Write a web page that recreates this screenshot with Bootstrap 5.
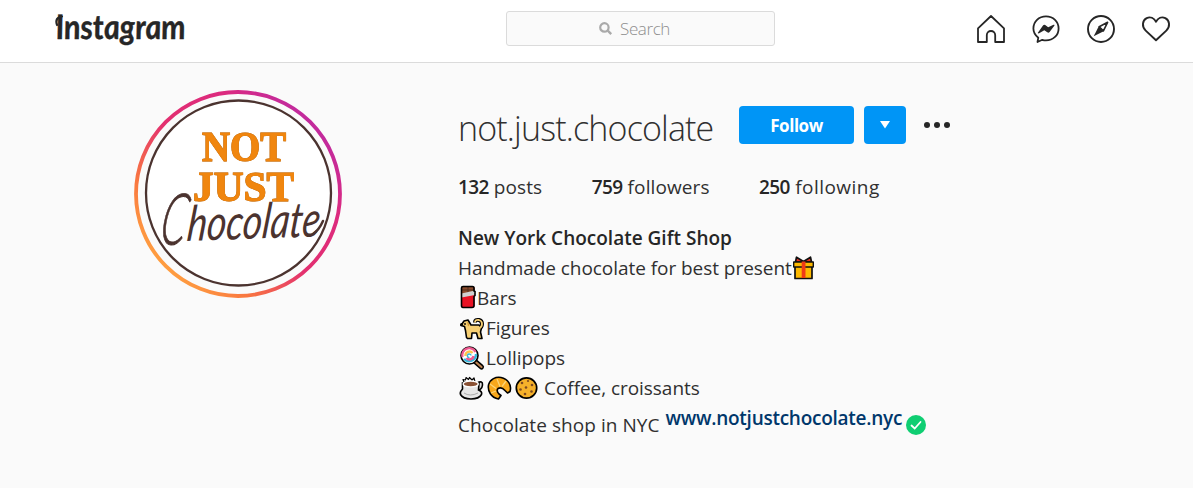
<!DOCTYPE html>
<html lang="en">
<head>
<meta charset="utf-8">
<meta name="viewport" content="width=device-width, initial-scale=1">
<title>not.just.chocolate</title>
<link href="https://cdn.jsdelivr.net/npm/bootstrap@5.3.0/dist/css/bootstrap.min.css" rel="stylesheet">
<style>
body{background:#fafafa;color:#303030;font-family:"Open Sans","Noto Sans",sans-serif;font-size:19px;line-height:30px;letter-spacing:-.05px;overflow:hidden}
svg{display:block;flex:none;overflow:visible}
.topbar{height:63px;border-bottom:1px solid #dbdbdb;display:grid;grid-template-columns:506px 269px 1fr}
.brand-mark{margin-left:50px}
.searchbox{height:35px;margin-top:11px;padding-right:12px;background:#fafafa;border:1px solid #dbdbdb;border-radius:3px;color:#8e8e8e;font-size:17px;font-weight:300;letter-spacing:-.4px}
.nav-icons{gap:27px;padding:15px 23px 0 0}
.profile{padding:27px 0 0 134px}
.info{margin-left:116px;padding-top:16px}
.title-row{height:38px}
.username{font-size:34px;font-weight:300;letter-spacing:-.84px;width:281px;line-height:38px;padding-top:3px}
.btn-ig{background:#0095f6;color:#fff;border:0;border-radius:4px;height:38px;padding:0;font-size:17px;font-weight:700;letter-spacing:-.45px;line-height:38px}
.btn-ig:hover{background:#1877f2;color:#fff}
.follow{width:115px;padding-top:1px}
.more{width:42px;margin-left:10px}
.dots{margin-left:17px}
.stats{margin-top:28px;gap:49.500px;letter-spacing:.1px}
.stats span:last-child{letter-spacing:.45px}
.stats b,.fw-semi{font-weight:600;color:#262626}
.stats b{letter-spacing:-.6px}
.fw-semi{letter-spacing:0}
.bio{margin-top:21px}
.line-shop{margin-top:7px}
.line-shop>span{letter-spacing:.06px}
.site{color:#00376b;font-weight:600;letter-spacing:-.26px;margin:-7px 0 0 6px}
.tick{margin:5px 0 0 4px}
</style>
</head>
<body>
<header class="topbar bg-white">
  <svg class="brand-mark" width="150" height="62" viewBox="0 0 150 62" role="img"><g transform="skewX(5)"><text x="3" y="39" font-family="Lato" font-style="italic" font-weight="700" font-size="34" textLength="130" lengthAdjust="spacingAndGlyphs" fill="#262626" stroke="#262626" stroke-width=".4">Instagram</text></g><path d="M12 16.500Q4.500 17.500 7 25" fill="none" stroke="#262626" stroke-width="2.200" stroke-linecap="round"/></svg>
  <div class="searchbox d-flex justify-content-center align-items-center">
    <svg width="13" height="13" viewBox="0 0 13 13" class="me-2" fill="none" stroke="#aaa"><circle cx="5.4" cy="5.4" r="4.2" stroke-width="2.2"/><path d="M8.7 8.7 12.2 12.2" stroke-width="2.4"/></svg><span>Search</span>
  </div>
  <nav class="nav-icons d-flex justify-content-end">
    <svg width="28" height="28" viewBox="0 0 28 28" fill="none" stroke="#262626" stroke-width="1.8" stroke-linejoin="round"><path d="M14 1 27 13.3V27H18.2V20.2a4.2 4.2 0 0 0-8.4 0V27H1V13.3Z"/></svg>
    <svg width="28" height="28" viewBox="0 0 28 28"><path d="M14 1.4C6.8 1.4 1.4 6.7 1.4 13.500c0 4 1.800 6.800 4.900 9.200L5.500 27l4.800-2.200c1.200.4 2.400.6 3.700.6 7.200 0 12.600-5.200 12.600-12S21.200 1.400 14 1.400Z" fill="none" stroke="#262626" stroke-width="1.8" stroke-linejoin="round"/><path d="M5.700 18 11 10.400q1-1 2.200-.3l3 2.200 5.300-2.500c.8-.3 1.300.3.800 1L17.600 17q-1 1.200-2.300.3L12.300 15.200 6.700 18.500Z" fill="#262626"/></svg>
    <svg width="28" height="28" viewBox="0 0 28 28"><circle cx="14" cy="14" r="13" fill="none" stroke="#262626" stroke-width="1.900"/><path d="M20.600 7.300 16.400 15.900 12.200 11.700Z" fill="#fff" stroke="#262626" stroke-width="1.600" stroke-linejoin="round"/><path d="M11.800 11.300 16.700 16.200 6.700 21.300Z" fill="#262626"/></svg>
    <svg width="28" height="28" viewBox="0 0 28 28" fill="none" stroke="#262626" stroke-width="1.900" stroke-linejoin="round"><path d="M14 25.300 3.700 15.600C-.5 11.500.3 5.300 4.700 3.100 8.400 1.400 12 3 14 6.700 16 3 19.600 1.400 23.300 3.100 27.700 5.300 28.500 11.500 24.300 15.600Z"/></svg>
  </nav>
</header>
<main class="profile d-flex align-items-start">
  <svg width="208" height="208" viewBox="0 0 208 208">
    <defs><linearGradient id="ring" x1=".12" y1=".85" x2=".85" y2=".15"><stop offset="0" stop-color="#ff9f40"/><stop offset=".2" stop-color="#f97740"/><stop offset=".48" stop-color="#e3306f"/><stop offset=".8" stop-color="#dc2a7f"/><stop offset="1" stop-color="#c32a9c"/></linearGradient></defs>
    <circle cx="104" cy="104" r="102" fill="none" stroke="url(#ring)" stroke-width="3.800"/>
    <circle cx="104.500" cy="103" r="92.500" fill="#fff" stroke="#4b332f" stroke-width="2.300"/>
    <g font-family="Liberation Serif" font-weight="700" fill="#f0860f" stroke="#f0860f" stroke-width="1.100" style="filter:drop-shadow(.6px 0 0 #8a5a30)">
      <text x="68" y="71" font-size="43" textLength="84" lengthAdjust="spacingAndGlyphs">NOT</text>
      <text x="59" y="111" font-size="43" textLength="101" lengthAdjust="spacingAndGlyphs">JUST</text>
    </g>
    <g fill="#4b332f" font-family="Lato" font-style="italic">
      <text transform="translate(24 154) rotate(2) skewX(-8) scale(.56 1)" font-size="72" font-weight="300" stroke="#4b332f" stroke-width=".9">C</text>
      <text x="52" y="151" font-size="49" font-weight="400" textLength="133" lengthAdjust="spacingAndGlyphs" transform="rotate(-2 52 151) translate(52 151) skewX(-8) translate(-52 -151)">hocolate</text>
    </g>
    <path d="M179 144Q185 140 189 131" fill="none" stroke="#4b332f" stroke-width="2.500" stroke-linecap="round"/>
  </svg>
  <section class="info">
    <div class="title-row d-flex align-items-start">
      <h1 class="username m-0">not.just.chocolate</h1>
      <button class="btn btn-ig follow">Follow</button>
      <button class="btn btn-ig more d-flex justify-content-center align-items-center" aria-label="Suggestions"><svg width="10" height="8" viewBox="0 0 10 8"><path d="M0 0H10L5 7.500Z" fill="#fff"/></svg></button>
      <svg class="dots" width="28" height="38" viewBox="0 0 28 38" fill="#262626"><circle cx="4" cy="19" r="3"/><circle cx="14" cy="19" r="3"/><circle cx="24" cy="19" r="3"/></svg>
    </div>
    <div class="stats d-flex"><span><b>132</b> posts</span><span><b>759</b> followers</span><span><b>250</b> following</span></div>
    <div class="bio">
      <div class="fw-semi">New York Chocolate Gift Shop</div>
      <div class="d-flex align-items-center"><span>Handmade chocolate for best present</span>
        <svg width="23" height="24" viewBox="-.5 0 23 24" stroke="#111" stroke-width="1.700" stroke-linejoin="round"><path d="M11 5.500 4 1.200 3 6H19L18 1.200Z" fill="#e63225"/><path d="M2.500 10H19.500V22.500H2.500Z" fill="#fdb900"/><path d="M1.200 6H20.800V11H1.200Z" fill="#fdb900" stroke-width="1.400"/><path d="M9.200 5.500H13V22H9.200Z" fill="#f03a17" stroke="none"/></svg></div>
      <div class="d-flex align-items-center">
        <svg width="19" height="24" viewBox="-.5 1 19 24"><rect x="3" y="1.500" width="13" height="21" rx="1.500" fill="#e81224"/><path d="M3 2h13v6L3 12Z" fill="#8a4b2d"/><path d="M3 5h13M9.500 2v6" stroke="#54301f"/><path d="M3 8.500 16.500 5.500V10L3 12.500Z" fill="#d0d0d0"/><path d="M4.500 1.500h9.500q1.500 0 1.500 1.500v3l1 .5v4l-1 1v9q0 2-2 2h-9q-1.500 0-1.500-2V3q0-1.500 1.500-1.500Z" fill="none" stroke="#000" stroke-width="1.600"/></svg><span>Bars</span></div>
      <div class="d-flex align-items-center">
        <svg width="28" height="24" viewBox="0 -1 28 24"><path d="M21 11c4-1 4-7 0-8q-4-.7-4 2.500" fill="none" stroke="#000" stroke-width="4"/><path d="M3 8.500 6 4l4-1 3 5h8l2.500 3-1 4 1.500 6.500h-4l-1.500-5.500h-4.500l-.5 5.500H9.500l-1-1-1-7-1-4Z" fill="#f7cf72" stroke="#000" stroke-width="1.600" stroke-linejoin="round"/><path d="M21 11c4-1 4-7 0-8q-4-.7-4 2.500" fill="none" stroke="#f7cf72" stroke-width="1.800"/><path d="M9 4.500l3 3-2 2Z" fill="#d29b36"/><circle cx="7" cy="7" r=".9"/><circle cx="3.500" cy="7.500" r="1.500"/></svg><span>Figures</span></div>
      <div class="d-flex align-items-center">
        <svg width="28" height="24" viewBox="-.5 0 28 24"><path d="M15 14l8 7" stroke="#000" stroke-width="5" stroke-linecap="round"/><path d="M16 15l7 6" stroke="#bd8454" stroke-width="2.200" stroke-linecap="round"/><circle cx="11" cy="9.500" r="8.500" fill="#fff" stroke="#000" stroke-width="1.600"/><g fill="none" stroke-width="2.400"><path d="M4 11a7 7 0 0 1 13-5" stroke="#f05a91"/><path d="M17.500 8a7 7 0 0 1-12 5" stroke="#36b9dc"/><path d="M7 10a4 4 0 0 1 7-3" stroke="#ffc34d"/><path d="M15 10a4 4 0 0 1-7 2" stroke="#f05a91"/><path d="M11 11.500a1.800 1.800 0 1 1 1.500-2" stroke="#36b9dc" stroke-width="1.500"/></g></svg><span>Lollipops</span></div>
      <div class="d-flex align-items-center">
        <svg width="86" height="26" viewBox="0 0 86 26">
          <path d="M6 7 5 4.500 7.500 5 8 2.500l2.500 2 1-2 2.500 2.500 2-2 1 4Z" fill="#fff" stroke="#000" stroke-width="1.200" stroke-linejoin="round"/><path d="M19 8q6-3 5.500 2-.5 5-6.500 6" fill="#ddd" stroke="#000" stroke-width="1.600"/><path d="M4.500 8v6q-3 3-2 5.500Q5 24 13 24t10.500-4.500q1-3-3-4.500l.5-7Z" fill="#e6e6e6" stroke="#000" stroke-width="1.600"/><ellipse cx="12.700" cy="9" rx="7.600" ry="2.900" fill="#8a5134" stroke="#fff" stroke-width="1.400"/><path d="M6 18q6 4 14 0" stroke="#aaa" fill="none"/>
          <path d="M40.500 24C33 22.500 29.500 16 30.500 10 32 4 38 1.500 43 2.500 50 4 54 10 52 16.500L49.500 18 47 15.500Q43.500 11.500 40 13.500 38 16 41 19L43 20.500Z" fill="#f8a81c" stroke="#000" stroke-width="1.600" stroke-linejoin="round"/><path d="M39 4l3 7.500M48 6l-4 5.500M32 9l6 4.500M33 18l5-2" stroke="#fbd477" stroke-width="1.300"/>
          <circle cx="68.500" cy="13" r="10.200" fill="#f6b12a" stroke="#000" stroke-width="1.700"/><g fill="#7e4a21"><circle cx="64" cy="8" r="1.300"/><circle cx="70" cy="6" r="1.100"/><circle cx="74" cy="10" r="1.300"/><circle cx="68" cy="12.500" r="1.300"/><circle cx="62.500" cy="14.500" r="1.300"/><circle cx="73.500" cy="16.500" r="1.300"/><circle cx="67" cy="19" r="1.300"/></g></svg><span>Coffee, croissants</span></div>
      <div class="line-shop d-flex align-items-start"><span>Chocolate shop in NYC</span><a class="site text-decoration-none" href="#">www.notjustchocolate.nyc</a>
        <svg class="tick" width="20" height="20" viewBox="0 0 20 20"><circle cx="10" cy="10" r="10" fill="#0fce72"/><path d="M5.500 10.500 8.700 13.500 14.500 7" fill="none" stroke="#fff" stroke-width="1.800" stroke-linecap="round"/></svg></div>
    </div>
  </section>
</main>
<script src="https://cdn.jsdelivr.net/npm/bootstrap@5.3.0/dist/js/bootstrap.bundle.min.js"></script>
</body>
</html>
